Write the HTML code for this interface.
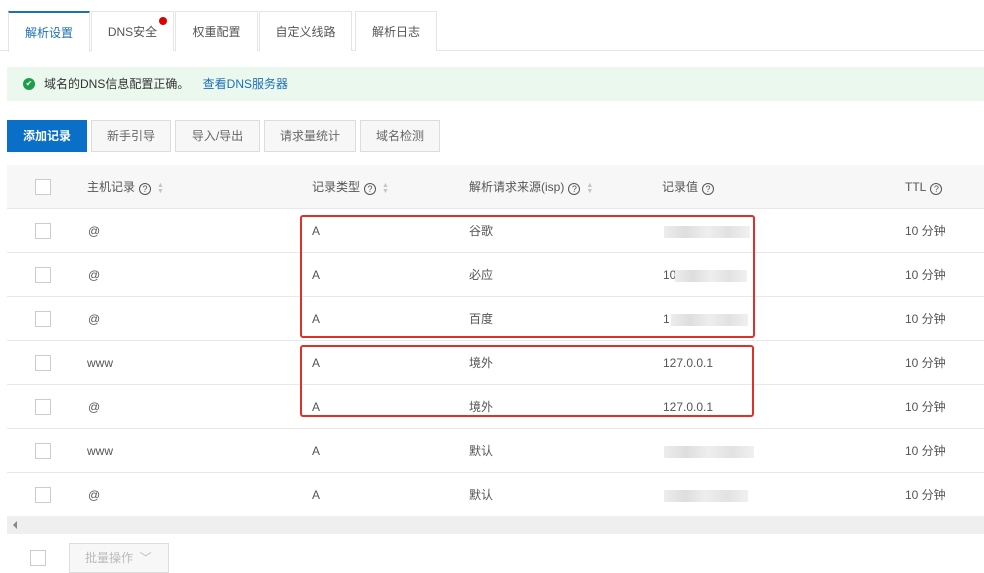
<!DOCTYPE html>
<html><head><meta charset="utf-8"><style>
*{box-sizing:border-box;margin:0;padding:0}
body{width:984px;height:564px;overflow:hidden;background:#fff;font-family:"Liberation Sans","Noto Sans CJK SC",sans-serif;font-size:12px;color:#333;position:relative}
.abs{position:absolute}
.tab{position:absolute;top:11px;height:40px;border:1px solid #e5e5e5;border-bottom:none;line-height:40px;text-align:center;color:#555;background:#fff}
.btn{position:absolute;top:120px;height:32px;border:1px solid #ddd;background:#f7f7f7;line-height:30px;text-align:center;color:#666}
.cb{position:absolute;width:16px;height:16px;border:1px solid #ccc;background:#fff}
.row{position:absolute;left:7px;width:977px;height:44px;border-bottom:1px solid #e8e8e8}
.cell{position:absolute;line-height:44px;color:#555}
.q{display:inline-block;width:12px;height:12px;border:1px solid #555;border-radius:50%;font-size:9px;line-height:10px;text-align:center;vertical-align:-1px;margin-left:4px}
.s{display:inline-block;vertical-align:-2px;margin-left:6px;color:#c4c4c4;font-size:7px;line-height:6px}
.blur{position:absolute;height:12px;background:linear-gradient(90deg,#ececec,#dedede,#eee,#e2e2e2,#f0f0f0)}
.red{position:absolute;border:2.5px solid #e0302a;border-radius:3px}
</style></head><body>
<div class="abs" style="left:0;top:50px;width:984px;height:1px;background:#e5e5e5"></div>
<div class="tab" style="left:8px;width:82px;border-top:2px solid #1d6fb8;color:#1d6fb8;height:41px">解析设置</div>
<div class="tab" style="left:91px;width:83px">DNS安全</div>
<div class="abs" style="left:159px;top:17px;width:8px;height:8px;border-radius:50%;background:#d00"></div>
<div class="tab" style="left:175px;width:83px">权重配置</div>
<div class="tab" style="left:259px;width:93px">自定义线路</div>
<div class="tab" style="left:355px;width:82px">解析日志</div>
<div class="abs" style="left:7px;top:67px;width:977px;height:34px;background:#eaf8ee;line-height:34px;padding-left:37px;color:#333">域名的DNS信息配置正确。 <span style="color:#1d6fb8;margin-left:10px">查看DNS服务器</span></div>
<div class="abs" style="left:23px;top:78px;width:12px;height:12px;border-radius:50%;background:#1e9e4a;color:#fff;font-size:8px;line-height:12px;text-align:center">✔</div>
<div class="btn" style="left:7px;width:80px;background:#0a6fc7;border-color:#0a6fc7;color:#fff;font-weight:bold">添加记录</div>
<div class="btn" style="left:91px;width:80px">新手引导</div>
<div class="btn" style="left:175px;width:85px">导入/导出</div>
<div class="btn" style="left:264px;width:92px">请求量统计</div>
<div class="btn" style="left:360px;width:80px">域名检测</div>
<div class="abs" style="left:7px;top:165px;width:977px;height:44px;background:#f7f7f7;border-bottom:1px solid #e8e8e8"></div>
<div class="cb" style="left:35px;top:179px"></div>
<div class="cell" style="left:87px;top:165px">主机记录<span class="q">?</span><span class="s">▲<br>▼</span></div>
<div class="cell" style="left:312px;top:165px">记录类型<span class="q">?</span><span class="s">▲<br>▼</span></div>
<div class="cell" style="left:469px;top:165px">解析请求来源(isp)<span class="q">?</span><span class="s">▲<br>▼</span></div>
<div class="cell" style="left:662px;top:165px">记录值<span class="q">?</span></div>
<div class="cell" style="left:905px;top:165px">TTL<span class="q">?</span></div>

<div class="row" style="top:209px"></div><div class="row" style="top:253px"></div><div class="row" style="top:297px"></div><div class="row" style="top:341px"></div><div class="row" style="top:385px"></div><div class="row" style="top:429px"></div><div class="row" style="top:473px"></div>

<div class="cb" style="left:35px;top:223px"></div><div class="cell" style="left:88px;top:209px">@</div><div class="cell" style="left:312px;top:209px">A</div><div class="cell" style="left:469px;top:209px">谷歌</div><div class="blur" style="left:664px;top:226px;width:86px"></div><div class="cell" style="left:905px;top:209px">10 分钟</div>
<div class="cb" style="left:35px;top:267px"></div><div class="cell" style="left:88px;top:253px">@</div><div class="cell" style="left:312px;top:253px">A</div><div class="cell" style="left:469px;top:253px">必应</div><div class="cell" style="left:663px;top:253px">10</div><div class="blur" style="left:675px;top:270px;width:72px"></div><div class="cell" style="left:905px;top:253px">10 分钟</div>
<div class="cb" style="left:35px;top:311px"></div><div class="cell" style="left:88px;top:297px">@</div><div class="cell" style="left:312px;top:297px">A</div><div class="cell" style="left:469px;top:297px">百度</div><div class="cell" style="left:663px;top:297px">1</div><div class="blur" style="left:671px;top:314px;width:77px"></div><div class="cell" style="left:905px;top:297px">10 分钟</div>
<div class="cb" style="left:35px;top:355px"></div><div class="cell" style="left:87px;top:341px">www</div><div class="cell" style="left:312px;top:341px">A</div><div class="cell" style="left:469px;top:341px">境外</div><div class="cell" style="left:663px;top:341px">127.0.0.1</div><div class="cell" style="left:905px;top:341px">10 分钟</div>
<div class="cb" style="left:35px;top:399px"></div><div class="cell" style="left:88px;top:385px">@</div><div class="cell" style="left:312px;top:385px">A</div><div class="cell" style="left:469px;top:385px">境外</div><div class="cell" style="left:663px;top:385px">127.0.0.1</div><div class="cell" style="left:905px;top:385px">10 分钟</div>
<div class="cb" style="left:35px;top:443px"></div><div class="cell" style="left:87px;top:429px">www</div><div class="cell" style="left:312px;top:429px">A</div><div class="cell" style="left:469px;top:429px">默认</div><div class="blur" style="left:664px;top:446px;width:90px"></div><div class="cell" style="left:905px;top:429px">10 分钟</div>
<div class="cb" style="left:35px;top:487px"></div><div class="cell" style="left:88px;top:473px">@</div><div class="cell" style="left:312px;top:473px">A</div><div class="cell" style="left:469px;top:473px">默认</div><div class="blur" style="left:664px;top:490px;width:84px"></div><div class="cell" style="left:905px;top:473px">10 分钟</div>

<div class="red" style="left:300px;top:215px;width:455px;height:123px"></div>
<div class="red" style="left:300px;top:345px;width:454px;height:72px"></div>

<div class="abs" style="left:7px;top:516px;width:977px;height:18px;background:#efefef"></div>
<div class="abs" style="left:13px;top:521px;width:0;height:0;border-right:4px solid #888;border-top:4px solid transparent;border-bottom:4px solid transparent"></div>
<div class="cb" style="left:30px;top:550px"></div>
<div class="abs" style="left:69px;top:543px;width:100px;height:30px;border:1px solid #ddd;background:#f7f7f7;color:#bbb;line-height:28px;padding-left:15px">批量操作 &nbsp;﹀</div>
</body></html>
